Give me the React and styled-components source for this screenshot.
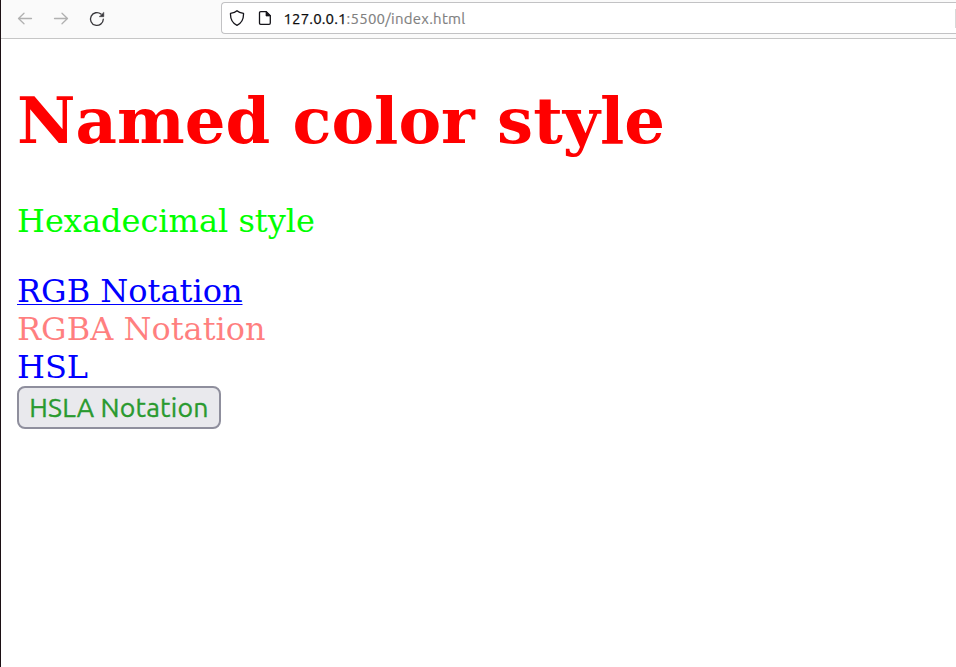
import React from "react";
import styled, { createGlobalStyle } from "styled-components";

const GlobalStyle = createGlobalStyle`
  * { box-sizing: border-box; }
  body { margin: 0; background: #fff; overflow: hidden; }
`;

const Window = styled.div`
  width: 956px;
  height: 667px;
  border-left: 1px solid #1c1014;
  background: #fff;
  overflow: hidden;
`;

const Toolbar = styled.header`
  display: flex;
  height: 39px;
  padding-left: 16px;
  background: #fafafa;
  border-bottom: 1px solid #c6c6c6;
`;

const NavButtons = styled.nav`
  display: flex;
  gap: 20px;
  width: 204px;
  padding-top: 11px;
`;

const Icon = styled.svg`
  width: 16px;
  height: 16px;
  flex: none;
  fill: none;
  stroke: ${(p) => p.$color || "#15141a"};
  stroke-width: 1.3;
  stroke-linecap: round;
  stroke-linejoin: round;
`;

const AddressBar = styled.div`
  display: flex;
  flex: 1;
  align-items: center;
  gap: 12px;
  height: 32px;
  margin-top: 2px;
  padding-left: 7px;
  border: 1px solid #c2c2c4;
  border-right: 0;
  border-radius: 4px 0 0 4px;
  background: #fff;
`;

const Url = styled.span`
  flex: 1;
  margin-left: -1.5px;
  padding-top: 2px;
  font: 15px/20px Ubuntu, "Noto Sans", sans-serif;
  letter-spacing: 0.24px;
  color: #808080;
  -webkit-text-stroke: 0.15px #808080;
  white-space: nowrap;
`;

const Host = styled.span`
  color: #0c0c0d;
  letter-spacing: 0.14px;
  -webkit-text-stroke: 0.25px #0c0c0d;
`;

const Edge = styled.span`
  width: 1px;
  height: 19px;
  background: #d8d8d8;
`;

const Page = styled.main`
  padding: 0 16px;
  font: 32px/38px "DejaVu Serif", serif;
`;

const Heading = styled.h1`
  margin: 44px 0 43px;
  font-size: 64px;
  line-height: 76px;
  color: red;
`;

const Paragraph = styled.p`
  margin: 0 0 32px;
  color: #00ff00;
`;

const Link = styled.a`
  display: block;
  width: max-content;
  color: rgb(0, 0, 255);
  text-decoration: underline;
  text-decoration-thickness: 1px;
  text-decoration-skip-ink: none;
  text-underline-offset: 2px;
`;

const Line = styled.div`
  color: ${(p) => p.$color};
`;

const Button = styled.button`
  display: block;
  width: 204px;
  height: 43px;
  padding: 0 0 2px;
  border: 2px solid #8f8f9d;
  border-radius: 8px;
  background: #e9e9ed;
  color: #2a9a2f;
  font: 26.67px/36px Ubuntu, "Noto Sans", sans-serif;
  letter-spacing: 0.2px;
  -webkit-text-stroke: 0.35px #2a9a2f;
  white-space: nowrap;
`;

export default function App() {
  return (
    <Window>
      <GlobalStyle />
      <Toolbar>
        <NavButtons>
          <Icon $color="#b1b1b1" viewBox="0 0 16 16"><path d="M14.500 7.500H1.500M7 2.200 1.500 7.500 7 12.800" /></Icon>
          <Icon $color="#b1b1b1" viewBox="0 0 16 16"><path d="M1.500 7.500h13M9 2.200 14.500 7.500 9 12.800" /></Icon>
          <Icon $color="#38373b" viewBox="0 0 16 16">
            <path d="M14.300 8.200A6.400 6.400 0 1 1 12 3.100" />
            <path d="M14.800 1.500v4.200h-4.300z" fill="#38373b" strokeWidth="0.5" />
          </Icon>
        </NavButtons>
        <AddressBar>
          <Icon viewBox="0 0 16 16"><path d="M8 .8C6 2.700 3.700 3 1.500 3.300 1.200 9.500 3 13 8 15.300 13 13 14.800 9.500 14.500 3.300 12.300 3 10 2.700 8 .8z" /></Icon>
          <Icon viewBox="0 0 16 16">
            <path d="M3.700 1.700h5.600l4 4v7.400q0 1.200-1.200 1.200H3.700q-1.200 0-1.200-1.200V2.900q0-1.200 1.200-1.200z" />
            <path d="M9 1.700v4.300h4.300z" fill="#15141a" strokeWidth="0.7" />
          </Icon>
          <Url><Host>127.0.0.1</Host>:5500/index.html</Url>
          <Edge />
        </AddressBar>
      </Toolbar>
      <Page>
        <Heading>Named color style</Heading>
        <Paragraph>Hexadecimal style</Paragraph>
        <Link>RGB Notation</Link>
        <Line $color="rgba(255, 0, 0, 0.5)">RGBA Notation</Line>
        <Line $color="hsl(240, 100%, 50%)">HSL</Line>
        <Button>HSLA Notation</Button>
      </Page>
    </Window>
  );
}
